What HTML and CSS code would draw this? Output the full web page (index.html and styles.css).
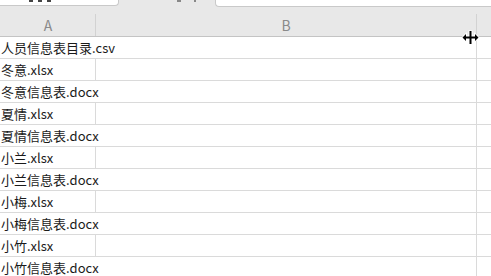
FILE: index.html
```html
<!DOCTYPE html>
<html lang="zh-CN">
<head>
  <meta charset="UTF-8">
  <title>文件目录</title>
  <link rel="stylesheet" href="styles.css">
</head>
<body>
  <div class="toolbar">
    <div class="tab tab-left"><span class="dash"></span><span class="dash"></span><span class="dash"></span></div>
    <div class="tab-gap"><span class="mark"></span><span class="mark small"></span></div>
    <div class="tab tab-right"></div>
  </div>

  <div class="sheet">
    <div class="row head">
      <div class="cell col-a">A</div>
      <div class="cell col-b">B</div>
      <div class="cell col-c"></div>
    </div>

    <div class="row"><div class="cell col-a wide">人员信息表目录.csv</div><div class="cell col-b"></div><div class="cell col-c"></div></div>
    <div class="row"><div class="cell col-a">冬意.xlsx</div><div class="cell col-b"></div><div class="cell col-c"></div></div>
    <div class="row"><div class="cell col-a wide">冬意信息表.docx</div><div class="cell col-b"></div><div class="cell col-c"></div></div>
    <div class="row"><div class="cell col-a">夏情.xlsx</div><div class="cell col-b"></div><div class="cell col-c"></div></div>
    <div class="row"><div class="cell col-a wide">夏情信息表.docx</div><div class="cell col-b"></div><div class="cell col-c"></div></div>
    <div class="row"><div class="cell col-a">小兰.xlsx</div><div class="cell col-b"></div><div class="cell col-c"></div></div>
    <div class="row"><div class="cell col-a wide">小兰信息表.docx</div><div class="cell col-b"></div><div class="cell col-c"></div></div>
    <div class="row"><div class="cell col-a">小梅.xlsx</div><div class="cell col-b"></div><div class="cell col-c"></div></div>
    <div class="row"><div class="cell col-a wide">小梅信息表.docx</div><div class="cell col-b"></div><div class="cell col-c"></div></div>
    <div class="row"><div class="cell col-a">小竹.xlsx</div><div class="cell col-b"></div><div class="cell col-c"></div></div>
    <div class="row"><div class="cell col-a wide">小竹信息表.docx</div><div class="cell col-b"></div><div class="cell col-c"></div></div>
  </div>

  <!-- resize cursor over the column edge -->
  <svg class="cursor" width="17" height="15" viewBox="0 0 17 15">
    <path d="M8.5 0.5v14M1 7.5h15" stroke="#fff" stroke-width="4" fill="none"/>
    <path d="M1 7.5l3-3v6zM16 7.5l-3-3v6z" fill="#fff" stroke="#fff" stroke-width="2"/>
    <path d="M8.5 1v13M2 7.5h13" stroke="#000" stroke-width="2" fill="none"/>
    <path d="M0.5 7.5l3.5-3.5v7zM16.5 7.5l-3.5-3.5v7z" fill="#000"/>
  </svg>
</body>
</html>
```

FILE: styles.css
```css
body {
  margin: 0;
  width: 491px;
  height: 276px;
  overflow: hidden;
  background-color: #fff;
  font-family: "Noto Sans CJK SC", "Noto Sans", sans-serif;
  color: #1a1a1a;
  position: relative;
}

.toolbar {
  display: flex;
  height: 14px;
  background-color: #e8e8e8;
}

.tab {
  height: 6px;
  background-color: #fff;
  border-bottom: 1px solid #c9c9c9;
}

.tab-left {
  width: 119px;
  border-right: 1px solid #c9c9c9;
  border-bottom-right-radius: 4px;
  display: flex;
  align-items: flex-start;
  gap: 5px;
  padding-left: 29px;
  box-sizing: border-box;
}

.dash {
  width: 4px;
  height: 2px;
  background-color: #444;
}

.tab-gap {
  width: 96px;
  display: flex;
  gap: 13px;
  padding-left: 58px;
  box-sizing: border-box;
}

.mark {
  width: 4px;
  height: 2px;
  background-color: #888;
}

.mark.small {
  width: 2px;
}

.tab-right {
  flex: 1;
  border-left: 1px solid #c9c9c9;
  border-bottom-left-radius: 4px;
}

.row {
  display: flex;
  height: 21px;
  border-bottom: 1px solid #dadada;
}

.cell {
  box-sizing: border-box;
  height: 21px;
  line-height: 21px;
  font-size: 13px;
  white-space: nowrap;
}

.col-a {
  width: 96px;
  padding-left: 1px;
  border-right: 1px solid #dadada;
}

.col-a.wide {
  border-right-color: transparent;
  overflow: visible;
}

.col-b {
  width: 381px;
  border-right: 1px solid #dadada;
}

.col-c {
  flex: 1;
}

.head {
  height: 22px;
  background-color: #e8e8e8;
  border-bottom-color: #c4c4c4;
}

.head .cell {
  height: 22px;
  line-height: 22px;
  text-align: center;
  color: #8a8a8a;
  font-size: 14px;
  border-right-color: #d2d2d2;
}

.cursor {
  position: absolute;
  left: 462px;
  top: 30px;
}
```
